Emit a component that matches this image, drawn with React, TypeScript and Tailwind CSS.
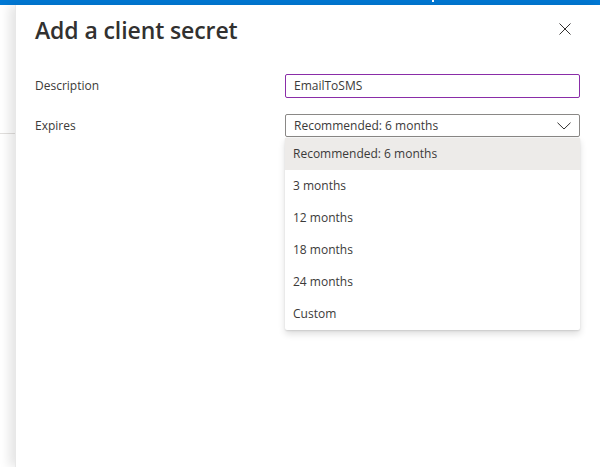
import React from "react";

const font = { fontFamily: '"Open Sans", "Noto Sans", Arial, sans-serif' };

const options = [
  "Recommended: 6 months",
  "3 months",
  "12 months",
  "18 months",
  "24 months",
  "Custom",
];

export default function App() {
  return (
    <div className="w-[600px] h-[467px] flex flex-col bg-white overflow-hidden text-[#3b3a39]" style={font}>
      <div className="h-[5px] bg-[#0078d4] shrink-0 flex">
        <div className="ml-[432px] w-[2px] h-[2px] bg-white" />
      </div>
      <div className="flex flex-1">
        <div className="w-[15px] shrink-0 bg-white">
          <div className="mt-[128px] h-px bg-[#e1dfdd]" />
        </div>
        <div className="flex-1 bg-white shadow-[-6px_0_10px_rgba(0,0,0,0.10)] border-l border-[#e8e8e8] relative">
          <div className="flex items-start justify-between pl-[19px] pr-[29px] pt-[9px]">
            <h1 className="text-[23px] leading-[32px] font-semibold text-[#323130] tracking-[-0.1px]">
              Add a client secret
            </h1>
            <button className="mt-[9px] w-[12px] h-[12px] flex items-center justify-center">
              <svg width="12" height="12" viewBox="0 0 12 12">
                <path d="M0.5 0.5 L11.5 11.5 M11.5 0.5 L0.5 11.5" stroke="#323130" strokeWidth="1" fill="none" />
              </svg>
            </button>
          </div>

          <div className="pl-[19px] pr-[20px] mt-[28px] flex flex-col">
            <div className="flex items-center h-[24px]">
              <div className="w-[250px] text-[12px] leading-[16px]">Description</div>
              <div className="flex-1 h-[24px] border border-[#8a2da8] rounded-[2px] flex items-center pl-[8px] text-[12px]">
                EmailToSMS
              </div>
            </div>

            <div className="flex items-center h-[23px] mt-[16px]">
              <div className="w-[250px] text-[12px] leading-[16px]">Expires</div>
              <div className="flex-1 h-[23px] border border-[#8a8886] rounded-[2px] flex items-center justify-between pl-[8px] pr-[8px] text-[12px]">
                <span>Recommended: 6 months</span>
                <svg width="14" height="8" viewBox="0 0 14 8">
                  <path d="M0.5 0.7 L7 7 L13.5 0.7" stroke="#323130" strokeWidth="1" fill="none" />
                </svg>
              </div>
            </div>

            <div className="flex mt-[1px]">
              <div className="w-[250px]" />
              <div className="flex-1 bg-white rounded-[2px] shadow-[0_3.2px_7.2px_rgba(0,0,0,0.132),0_0.6px_1.8px_rgba(0,0,0,0.108)] flex flex-col">
                {options.map((o, i) => (
                  <div
                    key={o}
                    className={
                      i === 0
                        ? "h-[32px] flex items-center pl-[8px] text-[12px] bg-[#edebe9]"
                        : "h-[32px] flex items-center pl-[8px] text-[12px]"
                    }
                  >
                    {o}
                  </div>
                ))}
              </div>
            </div>
          </div>
        </div>
      </div>
    </div>
  );
}
